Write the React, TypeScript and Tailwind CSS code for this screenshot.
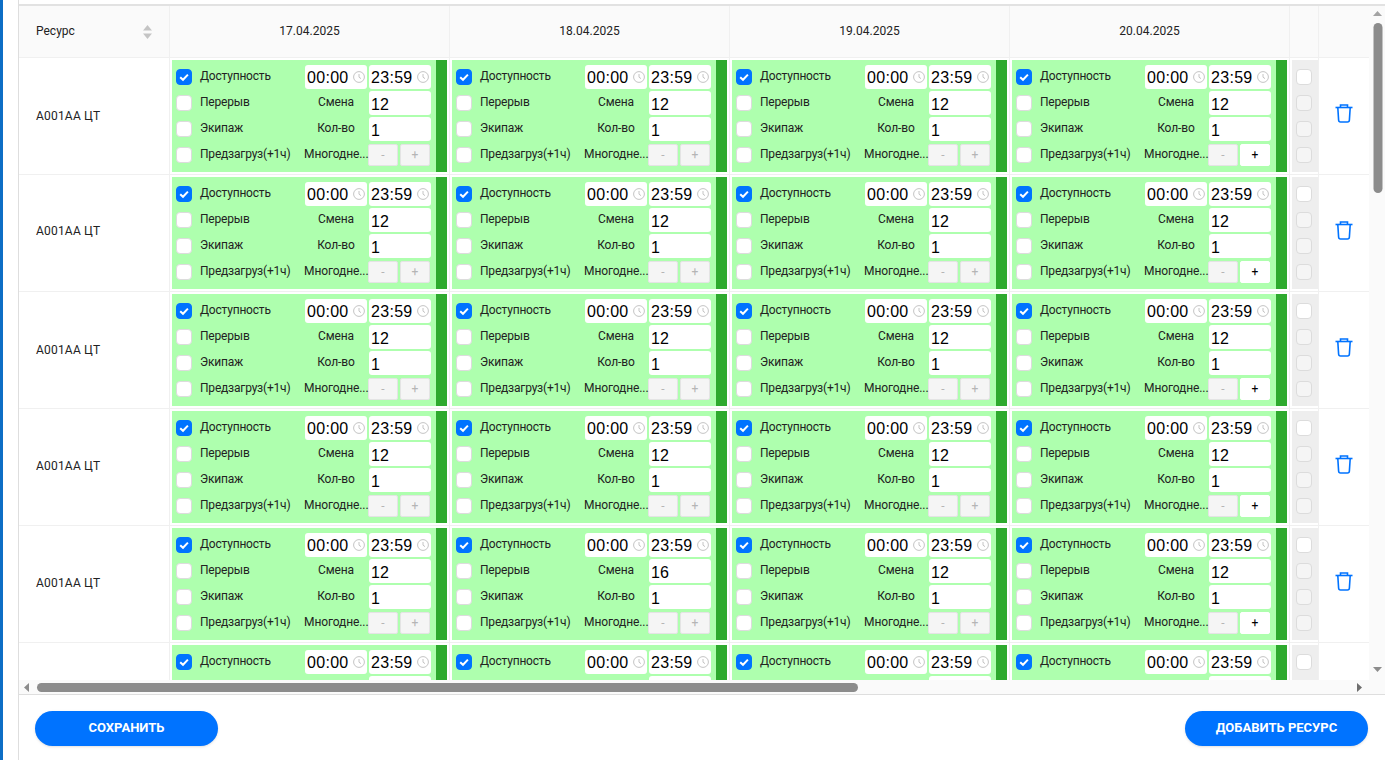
const days = ['17.04.2025', '18.04.2025', '19.04.2025', '20.04.2025']

const rows = [
  { name: 'А001АА ЦТ', shift: ['12', '12', '12', '12'], nudge: 'pb-0' },
  { name: 'А001АА ЦТ', shift: ['12', '12', '12', '12'], nudge: 'pb-[4px]' },
  { name: 'А001АА ЦТ', shift: ['12', '12', '12', '12'], nudge: 'pb-0' },
  { name: 'А001АА ЦТ', shift: ['12', '12', '12', '12'], nudge: 'pb-[2px]' },
  { name: 'А001АА ЦТ', shift: ['12', '16', '12', '12'], nudge: 'pb-[2px]' },
]

const Check = ({ on = false, muted = false }: { on?: boolean; muted?: boolean }) => (
  <span
    className={`flex h-4 w-4 shrink-0 items-center justify-center rounded-[4px] border ${
      on ? 'border-[#0073ff] bg-[#0073ff]' : muted ? 'border-[#dcdcdc] bg-[#f5f5f5]' : 'border-[#dcdcdc] bg-white'
    }`}
  >
    {on && (
      <svg width="12" height="12" viewBox="0 0 12 12" fill="none">
        <path d="M2.2 6.2 L5 8.8 L9.9 3.6" stroke="white" strokeWidth="2" />
      </svg>
    )}
  </span>
)

const Clock = () => (
  <svg width="12" height="12" viewBox="0 0 12 12" fill="none" className="shrink-0" stroke="#c4c4c4">
    <circle cx="6" cy="6" r="5.4" />
    <path d="M6 3 V6.2 L8 7.6" />
  </svg>
)

const Trash = () => (
  <svg width="18" height="19" viewBox="0 0 18 19" fill="none" stroke="#0073ff" strokeWidth="1.6">
    <path d="M0.5 3.5 H17.5" />
    <path d="M5.5 3.5 V1 H12.5 V3.5" />
    <path d="M2.8 3.5 L3.6 16 Q3.7 18 5.5 18 H12.5 Q14.3 18 14.4 16 L15.2 3.5" />
  </svg>
)

const TimeBox = ({ value }: { value: string }) => (
  <div className="flex h-6 w-[62px] shrink-0 items-center justify-between rounded-[3px] bg-white px-[2px] font-['Liberation_Sans',sans-serif] text-base leading-none tracking-[0.3px] text-black">
    <span className="translate-y-px">{value}</span>
    <Clock />
  </div>
)

const NumBox = ({ value }: { value?: string }) => (
  <div className="flex h-6 w-[62px] shrink-0 items-center rounded-[3px] bg-white px-[2px] font-['Liberation_Sans',sans-serif] text-base leading-none text-black">
    <span className="translate-y-[2px]">{value}</span>
  </div>
)

const Line = ({
  on,
  label,
  children,
}: {
  on?: boolean
  label: string
  children: React.ReactNode
}) => (
  <div className="flex h-6 items-center">
    <div className="flex w-[129px] shrink-0 items-center gap-2">
      <Check on={on} />
      <span className="-translate-y-px text-xs tracking-[-0.2px] text-[#222]">{label}</span>
    </div>
    <div className="flex items-center gap-[2px]">{children}</div>
  </div>
)

const Side = ({ text }: { text: string }) => (
  <span className="w-[62px] shrink-0 -translate-y-px truncate text-center text-xs tracking-[-0.1px] whitespace-nowrap text-[#222]">{text}</span>
)

const DayCard = ({ shift, plus }: { shift: string; plus: boolean }) => (
  <div className="flex h-28 w-[275px] overflow-hidden">
    <div className="flex w-[264px] flex-col gap-[2px] bg-[#aeffae] pt-[5px] pl-1">
      <Line on label="Доступность">
        <TimeBox value="00:00" />
        <TimeBox value="23:59" />
      </Line>
      <Line label="Перерыв">
        <Side text="Смена" />
        <NumBox value={shift} />
      </Line>
      <Line label="Экипаж">
        <Side text="Кол-во" />
        <NumBox value="1" />
      </Line>
      <Line label="Предзагруз(+1ч)">
        <span className="w-[63px] shrink-0 -translate-x-px -translate-y-px text-xs tracking-[-0.1px] whitespace-nowrap text-[#222]">Многодне...</span>
        <div className="-ml-[2px] flex w-[62px] gap-[2px]">
          <span className="flex h-[22px] w-[30px] items-center justify-center rounded-[2px] border border-[#e4e4e4] bg-[#f5f5f5] text-xs text-[#b5b5b5]">-</span>
          <span
            className={`flex h-[22px] w-[30px] items-center justify-center rounded-[2px] border text-xs ${
              plus ? 'border-white bg-white text-black' : 'border-[#e4e4e4] bg-[#f5f5f5] text-[#b5b5b5]'
            }`}
          >
            +
          </span>
        </div>
      </Line>
    </div>
    <div className="w-[11px] bg-[#2eaa2e]" />
  </div>
)

// the last row is cut by the scroll area, only its first line shows
const PartCard = () => (
  <div className="flex h-[38px] w-[275px] overflow-hidden">
    <div className="flex w-[264px] flex-col gap-[2px] bg-[#aeffae] pt-[5px] pl-1">
      <Line on label="Доступность">
        <TimeBox value="00:00" />
        <TimeBox value="23:59" />
      </Line>
      <div className="ml-[193px] w-[62px] shrink-0">
        <NumBox />
      </div>
    </div>
    <div className="w-[11px] bg-[#2eaa2e]" />
  </div>
)

const Row = ({ name, shift, nudge }: { name: string; shift: string[]; nudge: string }) => (
  <div className="flex h-[117px] shrink-0 border-b border-[#f0f0f0]">
    <div className={`flex w-[151px] shrink-0 items-center border-r border-[#f0f0f0] pl-[17px] text-xs tracking-[0.2px] text-[#222] ${nudge}`}>{name}</div>
    {shift.map((value, i) => (
      <div key={i} className="flex w-[280px] shrink-0 border-r border-[#f0f0f0] pt-[2px] pl-[2px]">
        <DayCard shift={value} plus={i === 3} />
      </div>
    ))}
    <div className="flex w-[29px] shrink-0 border-r border-[#f0f0f0] pt-[2px] pl-[2px]">
      <div className="flex h-28 w-[26px] flex-col gap-[10px] bg-[#eeeeee] pt-[9px] pl-1">
        <Check />
        <Check muted />
        <Check muted />
        <Check muted />
      </div>
    </div>
    <div className="flex w-[50px] shrink-0 items-center justify-center pb-[6px]">
      <Trash />
    </div>
  </div>
)

const LastRow = () => (
  <div className="flex h-[40px] shrink-0 overflow-hidden">
    <div className="w-[151px] shrink-0 border-r border-[#f0f0f0]" />
    {days.map((d) => (
      <div key={d} className="w-[280px] shrink-0 border-r border-[#f0f0f0] pt-[2px] pl-[2px]">
        <PartCard />
      </div>
    ))}
    <div className="w-[29px] shrink-0 border-r border-[#f0f0f0] pt-[2px] pl-[2px]">
      <div className="h-28 w-[26px] bg-[#eeeeee] pt-[9px] pl-1">
        <Check />
      </div>
    </div>
  </div>
)

export default function App() {
  return (
    <div className="flex h-[760px] w-[1391px] overflow-hidden bg-white font-['Roboto',sans-serif]">
      <div className="w-[3px] shrink-0 bg-[#0d6ec5]" />
      <div className="w-[15px] shrink-0 bg-white" />
      <div className="flex w-[1367px] shrink-0 flex-col border-l border-[#dedede] pt-1">
        <div className="flex h-[676px] flex-col border-t-2 border-[#e2e2e2]">
          <div className="flex h-[674px] overflow-hidden">
            <div className="w-[1350px] shrink-0 overflow-hidden">
              <div className="flex h-[52px] border-b border-[#f0f0f0] bg-[#fafafa] text-xs text-[#222]">
                <div className="flex w-[151px] shrink-0 items-center justify-between border-r border-[#f0f0f0] pr-[17px] pl-[17px]">
                  <span className="-translate-y-px">Ресурс</span>
                  <svg width="9" height="14" viewBox="0 0 9 14" fill="#c4c4c4">
                    <path d="M4.5 0 L9 5.5 H0 Z" />
                    <path d="M4.5 14 L9 8.5 H0 Z" />
                  </svg>
                </div>
                {days.map((d) => (
                  <div key={d} className="flex w-[280px] shrink-0 items-center justify-center border-r border-[#f0f0f0]">
                    <span className="-translate-y-px">{d}</span>
                  </div>
                ))}
                <div className="w-[29px] shrink-0 border-r border-[#f0f0f0]" />
                <div className="w-[50px] shrink-0" />
              </div>
              {rows.map((r, i) => (
                <Row key={i} {...r} />
              ))}
              <LastRow />
            </div>
            <div className="relative flex w-[17px] shrink-0 flex-col items-center justify-between bg-[#fafafa] pt-[5px] pb-[8px]">
              <svg width="9" height="5" viewBox="0 0 9 5" fill="#a3a3a3">
                <path d="M4.5 0 L9 5 H0 Z" />
              </svg>
              <div className="absolute top-[17px] left-1/2 h-[170px] w-[9px] -translate-x-1/2 rounded-full bg-[#8c8c8c]" />
              <svg width="9" height="5" viewBox="0 0 9 5" fill="#8c8c8c">
                <path d="M4.5 5 L9 0 H0 Z" />
              </svg>
            </div>
          </div>
        </div>
        <div className="flex h-[15px] items-center border-b border-[#dedede] bg-[#fafafa] pr-[23px] pl-[5px]">
          <svg width="5" height="9" viewBox="0 0 5 9" fill="#8c8c8c">
            <path d="M0 4.5 L5 0 V9 Z" />
          </svg>
          <div className="ml-[8px] h-[9px] w-[821px] rounded-full bg-[#8c8c8c]" />
          <svg width="5" height="9" viewBox="0 0 5 9" fill="#6e6e6e" className="ml-auto">
            <path d="M5 4.5 L0 0 V9 Z" />
          </svg>
        </div>
        <div className="flex items-center justify-between pt-4 pr-[17px] pl-[16px]">
          <button className="h-[35px] w-[183px] rounded-full bg-[#0073ff] pb-[2px] text-[13px] font-bold text-white shadow-sm">СОХРАНИТЬ</button>
          <button className="h-[35px] w-[183px] rounded-full bg-[#0073ff] pb-[2px] text-[13px] font-bold text-white shadow-sm">ДОБАВИТЬ РЕСУРС</button>
        </div>
      </div>
    </div>
  )
}
